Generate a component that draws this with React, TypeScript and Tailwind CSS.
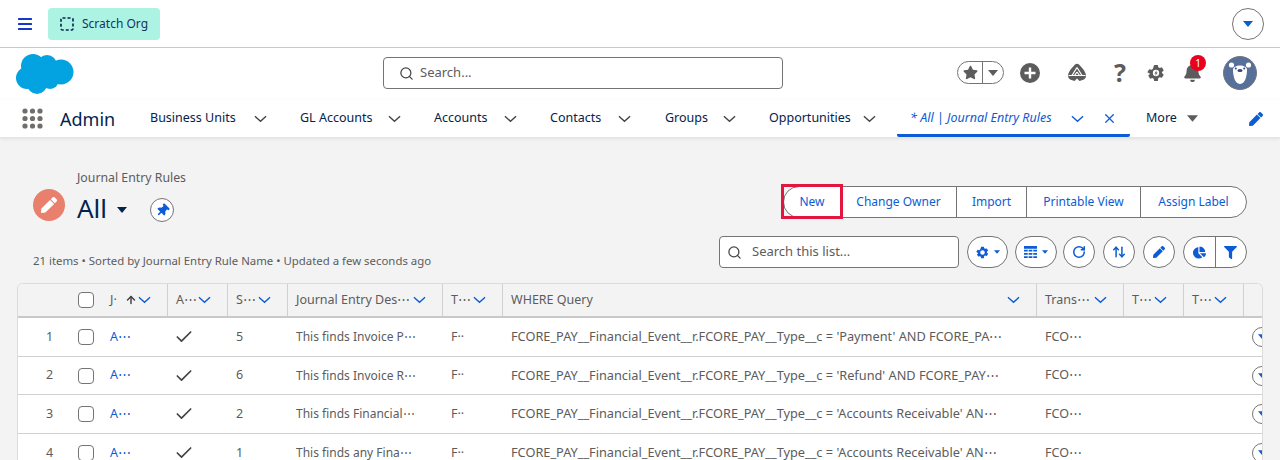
import { ArrowUp, ArrowUpDown, Check, RotateCw, Search, X } from 'lucide-react';
import { FaBell, FaChartPie, FaFilter, FaPen, FaStar, FaThumbtack } from 'react-icons/fa';

const navItems = [
  { label: 'Business Units', width: 'w-[150px] pr-[33px]' },
  { label: 'GL Accounts', width: 'w-[134px] pr-[33px]' },
  { label: 'Accounts', width: 'w-[116px] pr-[33px]' },
  { label: 'Contacts', width: 'w-[115px] pr-[34px]' },
  { label: 'Groups', width: 'w-[104px] pr-[33px]' },
  { label: 'Opportunities', width: 'w-[128px] pr-[21px]' },
];

const rowClass =
  'grid grid-cols-[52px_32px_66px_60px_60px_155px_60px_534px_87px_60px_60px_18px]';

const rows = [
  { no: 1, seq: 5, desc: 'This finds Invoice P⋯', query: "FCORE_PAY__Financial_Event__r.FCORE_PAY__Type__c = 'Payment' AND FCORE_PA⋯", h: 'h-[39px]' },
  { no: 2, seq: 6, desc: 'This finds Invoice R⋯', query: "FCORE_PAY__Financial_Event__r.FCORE_PAY__Type__c = 'Refund' AND FCORE_PAY⋯", h: 'h-[38px]' },
  { no: 3, seq: 2, desc: 'This finds Financial⋯', query: "FCORE_PAY__Financial_Event__r.FCORE_PAY__Type__c = 'Accounts Receivable' AN⋯", h: 'h-[39px]' },
  { no: 4, seq: 1, desc: 'This finds any Fina⋯', query: "FCORE_PAY__Financial_Event__r.FCORE_PAY__Type__c = 'Accounts Receivable' AN⋯", h: 'h-[39px]' },
];

function Chevron({ className }: { className?: string }) {
  return (
    <svg viewBox="0 0 14 8" className={className} fill="none" stroke="currentColor" strokeWidth="1.5">
      <path d="M1 1l6 5.5L13 1" />
    </svg>
  );
}

function Caret({ className }: { className?: string }) {
  return (
    <svg viewBox="0 0 10 6" className={className} fill="currentColor">
      <path d="M0 0h10L5 6z" />
    </svg>
  );
}

function Gear({ className, bolt }: { className?: string; bolt?: boolean }) {
  return (
    <svg viewBox="0 0 20 20" className={className} fill="currentColor">
      <path
        fillRule="evenodd"
        d="M8 1h4l.6 2.500 1.500.9 2.500-.7 2 3.400-1.900 1.800v1.200l1.900 1.800-2 3.400-2.500-.7-1.500.9L12 19H8l-.6-2.500-1.500-.9-2.500.7-2-3.400 1.900-1.800V10.900L.4 9.100l2-3.400 2.500.7 1.500-.9zM10 6.500a3.500 3.500 0 100 7 3.500 3.500 0 000-7z"
      />
      {bolt && <path d="M10.800 7L8.200 10.600h1.600L9.200 13.200l2.700-3.800h-1.700z" />}
    </svg>
  );
}

function NavChevron({ active }: { active?: boolean }) {
  return <Chevron className={`w-[13px] h-[8px] ${active ? 'text-[#0b5cd5]' : 'text-[#444]'}`} />;
}

function Cloud() {
  return (
    <svg viewBox="16 53 58 41" className="w-[58px] h-[41px]" fill="#03a2e0">
      <circle cx="33" cy="65" r="12" />
      <circle cx="47" cy="64" r="10" />
      <circle cx="61" cy="71" r="12.500" />
      <circle cx="27" cy="77" r="11" />
      <circle cx="37" cy="83" r="10" />
      <circle cx="50" cy="79" r="9" />
      <circle cx="43" cy="72" r="10" />
    </svg>
  );
}

function Bear() {
  return (
    <svg viewBox="0 0 34 34" className="w-[34px] h-[34px]">
      <circle cx="17" cy="17" r="16.500" fill="#56709a" stroke="#777" />
      <circle cx="8.500" cy="9" r="2.600" fill="#fff" />
      <circle cx="25.500" cy="9" r="2.600" fill="#fff" />
      <path d="M10 14c0-3 3.400-4.600 7-4.600s7 1.600 7 4.600c0 5-1.600 14-7 14s-7-9-7-14z" fill="#fff" />
      <circle cx="12.800" cy="12.400" r="1" fill="#33466b" />
      <circle cx="21.200" cy="12.400" r="1" fill="#33466b" />
      <ellipse cx="17" cy="14.500" rx="2.600" ry="1.600" fill="#33466b" />
    </svg>
  );
}

function HeaderCell({ label, arrow }: { label: string; arrow?: boolean }) {
  return (
    <div className="h-[32px] my-auto flex items-center border-r border-[#d0d0d0] pl-2 pr-[16px]">
      <span className="whitespace-nowrap">{label}</span>
      {arrow && <ArrowUp className="w-[12px] h-[12px] ml-[8px] text-[#444]" strokeWidth={3} />}
      <Chevron className="w-[13px] h-[8px] text-[#0b5cd5] ml-auto" />
    </div>
  );
}

function Box() {
  return <div className="w-[16px] h-[16px] rounded-[4px] border border-[#747474] bg-white" />;
}

function IconButton({ children, className }: { children: React.ReactNode; className: string }) {
  return (
    <div className={`h-[32px] flex items-center justify-center gap-[5px] bg-white border border-[#747474] rounded-full text-[#0b5cd5] ${className}`}>
      {children}
    </div>
  );
}

export default function App() {
  return (
    <div className="w-[1280px] h-[460px] overflow-hidden flex flex-col bg-[#f3f3f3] text-[12.500px] font-['Noto_Sans',sans-serif] text-[#03234d]">
      {/* Org bar */}
      <div className="h-[48px] shrink-0 bg-white border-b border-[#c9c9c9] flex items-center pl-[18px] pr-[16px]">
        <svg viewBox="0 0 14 12" className="w-[14px] h-[12px]" fill="#1538c9">
          <rect y="0" width="14" height="2" rx="0.500" />
          <rect y="5" width="14" height="2" rx="0.500" />
          <rect y="10" width="14" height="2" rx="0.500" />
        </svg>
        <div className="ml-[16px] h-[32px] w-[112px] rounded-[4px] bg-[#acf3e4] flex items-center pl-[12px] gap-[8px] text-[12px] text-[#16325c]">
          <svg viewBox="0 0 14 14" className="w-[14px] h-[14px]" fill="none" stroke="#03234d" strokeWidth="1.600">
            <rect x="1" y="1" width="12" height="12" rx="1.500" strokeDasharray="3 2" />
          </svg>
          <span className="pt-[1px]">Scratch Org</span>
        </div>
        <div className="ml-auto w-[32px] h-[32px] rounded-full border border-[#747474] flex items-center justify-center text-[#0b5cd5]">
          <Caret className="w-[10px] h-[6px]" />
        </div>
      </div>

      {/* Global header */}
      <div className="h-[52px] shrink-0 bg-white flex items-center">
        <div className="w-[383px] shrink-0 pl-[16px]">
          <Cloud />
        </div>
        <div className="w-[400px] h-[32px] mb-[2px] rounded-[4px] border border-[#747474] flex items-center pl-[15px] gap-[6px] text-[13px] text-[#5c5c5c] bg-white">
          <Search className="w-[15px] h-[15px] text-[#444]" strokeWidth={2} />
          Search...
        </div>
        <div className="ml-[174px] mb-[3px] flex items-center text-[#5c5c5c]">
          <div className="w-[47px] h-[23px] rounded-full border border-[#747474] flex items-center">
            <div className="w-[25px] h-full flex items-center justify-center border-r border-[#747474]">
              <FaStar className="w-[15px] h-[15px]" />
            </div>
            <Caret className="w-[10px] h-[6px] ml-[5px]" />
          </div>
          <svg viewBox="0 0 20 20" className="w-[20px] h-[20px] ml-[16px]">
            <circle cx="10" cy="10" r="10" fill="#5c5c5c" />
            <path d="M10 4.500v11M4.500 10h11" stroke="#fff" strokeWidth="2.400" />
          </svg>
          <svg viewBox="0 0 20 20" className="w-[20px] h-[20px] ml-[27px]" fill="#5c5c5c">
            <path d="M8 1.500c1-1 3-1 4 0l4 4.500c1 1.500 3 4 3 6.500 0 2.500-1.500 4-3.500 4.500l-3 1-2.500-2.500-2.500 2.500-3-1C2.500 16.500 1 15 1 12.500 1 10 3 7.500 4 6z" />
            <path d="M1.500 12.500h17M10 4.500L5 12.500M10 4.500l5 8M10 9l-2.500 3.500M10 9l2.500 3.500" stroke="#fff" strokeWidth="1.200" fill="none" />
          </svg>
          <span className="ml-[26px] w-[14px] text-[25px] leading-none font-bold text-center">?</span>
          <Gear bolt className="w-[18px] h-[18px] ml-[20px]" />
          <div className="relative ml-[18px]">
            <FaBell className="w-[19px] h-[19px]" />
            <div className="absolute -top-[8px] left-[7px] w-[16px] h-[16px] rounded-full bg-[#ea001e] text-white text-[10px] leading-[16px] text-center">
              1
            </div>
          </div>
          <div className="ml-[21px]">
            <Bear />
          </div>
        </div>
      </div>

      {/* App nav */}
      <div className="h-[38px] shrink-0 bg-white flex items-center border-b border-[#e5e5e5] shadow-[0_1px_3px_rgba(0,0,0,0.08)]">
        <svg viewBox="0 0 21 21" className="ml-[22px] w-[21px] h-[21px]" fill="#706e6b">
          {[3, 10.5, 18].map((cy) =>
            [3, 10.5, 18].map((cx) => <circle key={`${cx}-${cy}`} cx={cx} cy={cy} r="2.600" />),
          )}
        </svg>
        <span className="ml-[17px] w-[90px] text-[18px] leading-none">Admin</span>
        {navItems.map((item) => (
          <div key={item.label} className={`${item.width} shrink-0 flex items-center`}>
            <span className="whitespace-nowrap">{item.label}</span>
            <span className="ml-auto">
              <NavChevron />
            </span>
          </div>
        ))}
        <div className="w-[233px] h-full shrink-0 flex items-center pl-[13px] pr-[13px] border-b-[3px] border-[#0b5cd5] rounded-b-[2px] pt-[3px] text-[#0b5cd5] italic">
          <span className="whitespace-nowrap">* All | Journal Entry Rules</span>
          <span className="ml-auto">
            <NavChevron active />
          </span>
          <X className="w-[15px] h-[15px] ml-[18px]" strokeWidth={2} />
        </div>
        <span className="ml-[16px] w-[41px]">More</span>
        <Caret className="w-[11px] h-[7px] text-[#5c5c5c]" />
        <FaPen className="ml-[51px] w-[14px] h-[14px] text-[#0b5cd5]" />
      </div>

      {/* List view */}
      <div className="flex-1 min-h-0 pl-[17px]">
        <div className="flex justify-between pr-[33px]">
          <div className="pl-[16px] pt-[32px]">
            <div className="pl-[44px] text-[12.300px] text-[#5c5c5c] leading-[16px]">Journal Entry Rules</div>
            <div className="flex items-start h-[34px] mt-[3px]">
              <div className="w-[32px] h-[32px] rounded-full bg-[#e9806e] flex items-center justify-center">
                <FaPen className="w-[16px] h-[16px] text-white" />
              </div>
              <span className="ml-[12px] mt-[1px] w-[40px] text-[26px] leading-[36px] text-[#03234d]">All</span>
              <Caret className="mt-[18px] w-[10px] h-[6px]" />
              <div className="ml-[23px] mt-[9px] shrink-0 w-[24px] h-[24px] rounded-full bg-white border border-[#747474] flex items-center justify-center">
                <FaThumbtack className="w-[13px] h-[13px] text-[#0b5cd5] rotate-45" />
              </div>
            </div>
            <div className="mt-[30px] text-[11.400px] leading-[16px] text-[#5c5c5c] whitespace-nowrap">
              21 items • Sorted by Journal Entry Rule Name • Updated a few seconds ago
            </div>
          </div>
          <div className="pt-[48px] flex flex-col items-end">
            <div className="flex h-[32px] text-[12px] text-[#0b5cd5] bg-white rounded-full border border-[#747474] relative">
              <div className="w-[56px] flex items-center justify-center rounded-l-full">New</div>
              <div className="w-[116px] flex items-center justify-center border-l border-[#747474]">Change Owner</div>
              <div className="w-[70px] flex items-center justify-center border-l border-[#747474]">Import</div>
              <div className="w-[114px] flex items-center justify-center border-l border-[#747474]">Printable View</div>
              <div className="w-[106px] flex items-center justify-center border-l border-[#747474]">Assign Label</div>
              <div className="absolute -left-[3px] -top-[3px] w-[62px] h-[35px] border-[3px] border-[#e3163f]" />
            </div>
            <div className="mt-[18px] flex items-center">
              <div className="w-[240px] h-[32px] rounded-[4px] bg-white border border-[#747474] flex items-center pl-[7px] gap-[10px] text-[13px] text-[#5c5c5c]">
                <Search className="w-[15px] h-[15px] text-[#444]" strokeWidth={2} />
                Search this list...
              </div>
              <IconButton className="w-[41px] ml-[8px]">
                <Gear className="w-[13px] h-[13px]" />
                <Caret className="w-[6px] h-[4px]" />
              </IconButton>
              <IconButton className="w-[42px] ml-[7px]">
                <svg viewBox="0 0 14 14" className="w-[13px] h-[13px]" fill="currentColor">
                  <path d="M0 0h14v3H0zM0 4h4v2H0zM5 4h4v2H5zM10 4h4v2h-4zM0 7.500h4v2H0zM5 7.500h4v2H5zM10 7.500h4v2h-4zM0 11h4v2H0zM5 11h4v2H5zM10 11h4v2h-4z" />
                </svg>
                <Caret className="w-[6px] h-[4px]" />
              </IconButton>
              <IconButton className="w-[32px] ml-[6px]">
                <RotateCw className="w-[14px] h-[14px]" strokeWidth={2.600} />
              </IconButton>
              <IconButton className="w-[32px] ml-[8px]">
                <ArrowUpDown className="w-[14px] h-[14px]" strokeWidth={2.600} />
              </IconButton>
              <IconButton className="w-[32px] ml-[8px]">
                <FaPen className="w-[12px] h-[12px]" />
              </IconButton>
              <div className="ml-[8px] w-[64px] h-[32px] flex bg-white border border-[#747474] rounded-full text-[#0b5cd5]">
                <div className="flex-1 flex items-center justify-center border-r border-[#747474]">
                  <FaChartPie className="w-[13px] h-[13px]" />
                </div>
                <div className="flex-1 flex items-center justify-center">
                  <FaFilter className="w-[13px] h-[13px]" />
                </div>
              </div>
            </div>
          </div>
        </div>

        {/* Table */}
        <div className="mt-[14px] w-[1246px] rounded-t-[6px] border border-b-0 border-[#dddbda] bg-white overflow-hidden text-[#5c5c5c]">
          <div className={`${rowClass} h-[34px] bg-[#f3f3f3] border-b-2 border-[#c9c9c9]`}>
            <div />
            <div className="flex items-center pl-2">
              <Box />
            </div>
            <HeaderCell label="J·" arrow />
            <HeaderCell label="A⋯" />
            <HeaderCell label="S⋯" />
            <HeaderCell label="Journal Entry Des⋯" />
            <HeaderCell label="T⋯" />
            <HeaderCell label="WHERE Query" />
            <HeaderCell label="Trans⋯" />
            <HeaderCell label="T⋯" />
            <HeaderCell label="T⋯" />
            <div />
          </div>
          {rows.map((row) => (
            <div key={row.no} className={`${rowClass} ${row.h} border-b border-[#d0d0d0] items-center`}>
              <div className="text-center pl-[11px]">{row.no}</div>
              <div className="flex pl-2">
                <Box />
              </div>
              <div className="pl-2 text-[#0b5cd5]">A⋯</div>
              <div className="pl-[6px]">
                <Check className="w-[20px] h-[20px] text-[#444]" strokeWidth={2} />
              </div>
              <div className="pl-2">{row.seq}</div>
              <div className="pl-2 text-[12px] whitespace-nowrap overflow-hidden">{row.desc}</div>
              <div className="pl-2">F··</div>
              <div className="pl-2 text-[12.750px] whitespace-nowrap overflow-hidden">{row.query}</div>
              <div className="pl-2">FCO⋯</div>
              <div />
              <div />
              <div className="pl-2 overflow-hidden">
                <div className="w-[20px] h-[20px] rounded-full border border-[#747474] flex items-center pl-[5px] text-[#0b5cd5]">
                  <Caret className="w-[9px] h-[6px] shrink-0" />
                </div>
              </div>
            </div>
          ))}
        </div>
      </div>
    </div>
  );
}
